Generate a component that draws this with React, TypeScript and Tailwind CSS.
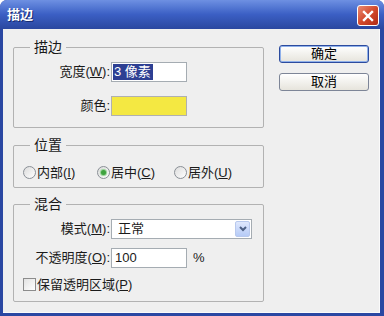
import React from "react";

const font = {
  fontFamily: '"Liberation Sans", "Noto Sans CJK SC", sans-serif',
};

function Group({
  title,
  className,
  children,
}: {
  title: string;
  className: string;
  children: React.ReactNode;
}) {
  return (
    <div className={`relative border border-[#b2b2b2] rounded-[2px] ${className}`}>
      <span className="absolute -top-[10px] left-[16px] px-[4px] bg-[#efefef] text-[14px] leading-[18px] text-[#1a1a1a]">
        {title}
      </span>
      {children}
    </div>
  );
}

function Label({ children }: { children: React.ReactNode }) {
  return (
    <div className="w-[97px] text-right pr-[1px] text-[13px] leading-[16px] text-[#1a1a1a]">
      {children}
    </div>
  );
}

function Radio({ checked, label, width }: { checked?: boolean; label: React.ReactNode; width: string }) {
  return (
    <div className={`flex items-center ${width}`}>
      <span className="w-[13px] h-[13px] rounded-full border border-[#8a8f96] bg-gradient-to-br from-[#dcdcdc] to-white flex items-center justify-center">
        {checked && (
          <span className="w-[5px] h-[5px] rounded-full bg-[#3fa33f] shadow-[0_0_1px_1px_#8fd08f]" />
        )}
      </span>
      <span className="ml-[1px] text-[13px] leading-[16px] text-[#1a1a1a]">{label}</span>
    </div>
  );
}

export default function App() {
  return (
    <div className="w-[384px] h-[316px] bg-white" style={font}>
      <div className="w-full h-full flex flex-col bg-[#2a47a2] rounded-t-[7px] overflow-hidden">
        {/* title bar */}
        <div className="h-[29px] flex items-center bg-gradient-to-b from-[#6e90e2] via-[#3b5fc4] to-[#2a479f] pl-[7px] pr-[5px]">
          <span className="text-white font-bold text-[13px] [text-shadow:1px_1px_0_#14296e]">描边</span>
          <div className="ml-auto mt-[2px] w-[22px] h-[21px] rounded-[3px] border border-white bg-gradient-to-br from-[#e98a72] via-[#d3492c] to-[#b12a14] flex items-center justify-center">
            <svg width="12" height="12" viewBox="0 0 12 12">
              <path d="M2 2 L10 10 M10 2 L2 10" stroke="white" strokeWidth="2.4" strokeLinecap="square" />
            </svg>
          </div>
        </div>

        {/* client area */}
        <div className="flex-1 ml-[3px] mr-[4px] mb-[3px] bg-[#efefef] flex pl-[10px] pt-[17px] border-r border-b border-[#fafafa]">
          <div className="flex flex-col w-[251px] pt-[1px]">
            <Group title="描边" className="h-[81px] pt-[14px]">
              <div className="flex items-center h-[20px]">
                <Label>
                  宽度(<u>W</u>):
                </Label>
                <div className="w-[76px] h-[20px] border border-[#a5acb2] bg-white flex items-center px-[1px]">
                  <span className="bg-[#2d3f93] text-white text-[13px] leading-[16px] pl-[1px] pr-[2px]">3 像素</span>
                </div>
              </div>
              <div className="flex items-center h-[20px] mt-[14px]">
                <Label>颜色:</Label>
                <div className="w-[76px] h-[20px] border border-[#b0b0b0] bg-[#f4e842]" />
              </div>
            </Group>

            <Group title="位置" className="h-[43px] mt-[17px] pt-[18px] pl-[9px]">
              <div className="flex items-center h-[17px]">
                <Radio width="w-[74px]" label={<>内部(<u>I</u>)</>} />
                <Radio width="w-[77px]" checked label={<>居中(<u>C</u>)</>} />
                <Radio width="w-[80px]" label={<>居外(<u>U</u>)</>} />
              </div>
            </Group>

            <Group title="混合" className="h-[98px] mt-[16px] pt-[14px]">
              <div className="flex items-center h-[20px]">
                <Label>
                  模式(<u>M</u>):
                </Label>
                <div className="w-[141px] h-[20px] border border-[#a5acb2] bg-white flex items-center">
                  <span className="pl-[6px] text-[13px] leading-[16px] text-[#1a1a1a]">正常</span>
                  <div className="ml-auto mr-[1px] w-[15px] h-[16px] rounded-[2px] border border-[#b8c9ee] bg-gradient-to-b from-[#dfe8fd] to-[#b6cbf7] flex items-center justify-center">
                    <svg width="8" height="6" viewBox="0 0 8 6">
                      <path d="M1 1 L4 4 L7 1" stroke="#4d6185" strokeWidth="2" fill="none" />
                    </svg>
                  </div>
                </div>
              </div>
              <div className="flex items-center h-[20px] mt-[9px]">
                <Label>
                  不透明度(<u>O</u>):
                </Label>
                <div className="w-[76px] h-[20px] border border-[#a5acb2] bg-white flex items-center">
                  <span className="pl-[3px] text-[13px] leading-[16px] text-[#1a1a1a]">100</span>
                </div>
                <span className="ml-[6px] text-[13px] leading-[16px] text-[#1a1a1a]">%</span>
              </div>
              <div className="flex items-center h-[15px] mt-[9px] pl-[9px]">
                <span className="w-[13px] h-[13px] border border-[#8c8c8c] bg-gradient-to-br from-[#e2e2e2] to-white" />
                <span className="ml-[1px] text-[13px] leading-[16px] text-[#1a1a1a]">
                  保留透明区域(<u>P</u>)
                </span>
              </div>
            </Group>
          </div>

          <div className="ml-[15px] -mt-[1px] flex flex-col gap-[10px]">
            <button className="w-[90px] h-[18px] rounded-[3px] border border-[#2c4b9e] bg-gradient-to-b from-white to-[#e6e4dc] shadow-[inset_0_0_0_1px_#8fb0ea] text-[13px] leading-[14px] text-black">
              确定
            </button>
            <button className="w-[90px] h-[18px] rounded-[3px] border border-[#7d8597] bg-gradient-to-b from-white to-[#e6e4dc] text-[13px] leading-[14px] text-black">
              取消
            </button>
          </div>
        </div>
      </div>
    </div>
  );
}
